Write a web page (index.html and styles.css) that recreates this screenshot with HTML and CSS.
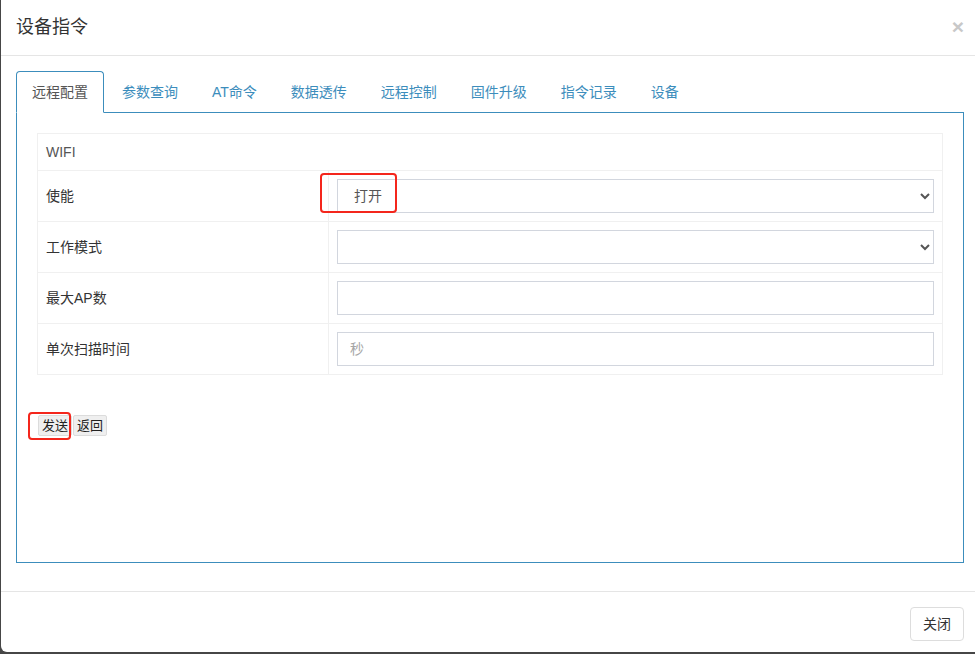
FILE: index.html
```html
<!DOCTYPE html>
<html lang="zh">
<head>
<meta charset="utf-8">
<title>设备指令</title>
<link rel="stylesheet" href="styles.css">
</head>
<body>
<div class="modal">
  <div class="modal-header">
    <h4 class="modal-title">设备指令</h4>
    <button class="close" type="button">×</button>
  </div>
  <div class="modal-body">
    <ul class="tabs">
      <li class="tab active">远程配置</li>
      <li class="tab">参数查询</li>
      <li class="tab">AT命令</li>
      <li class="tab">数据透传</li>
      <li class="tab">远程控制</li>
      <li class="tab">固件升级</li>
      <li class="tab">指令记录</li>
      <li class="tab">设备</li>
    </ul>
    <div class="pane">
      <table class="grid">
        <tr><th colspan="2">WIFI</th></tr>
        <tr>
          <td class="label">使能</td>
          <td class="field">
            <div class="mark-wrap">
              <select class="control"><option>打开</option><option>关闭</option></select>
              <span class="mark mark-select"></span>
            </div>
          </td>
        </tr>
        <tr>
          <td class="label">工作模式</td>
          <td class="field"><select class="control"><option></option></select></td>
        </tr>
        <tr>
          <td class="label">最大AP数</td>
          <td class="field"><input class="control" type="text"></td>
        </tr>
        <tr>
          <td class="label">单次扫描时间</td>
          <td class="field"><input class="control" type="text" placeholder="秒"></td>
        </tr>
      </table>
      <div class="actions">
        <div class="mark-wrap">
          <button class="btn-sm" type="button">发送</button>
          <span class="mark mark-send"></span>
        </div>
        <button class="btn-sm" type="button">返回</button>
      </div>
    </div>
  </div>
  <div class="modal-footer">
    <button class="btn-close" type="button">关闭</button>
  </div>
</div>
</body>
</html>
```

FILE: styles.css
```css
* { box-sizing: border-box; }
html, body { height: 100%; }
body {
  margin: 0;
  background: #464646;
  overflow: hidden;
  font-family: "Liberation Sans", "Noto Sans CJK SC", sans-serif;
  font-size: 14px;
  color: #333;
}
.modal {
  margin-left: 1px;
  width: 978px;
  height: 652px;
  background: #fff;
  border-radius: 0 0 0 6px;
  overflow: hidden;
}
.modal-header {
  display: flex;
  align-items: flex-start;
  justify-content: space-between;
  padding: 15px;
  border-bottom: 1px solid #e5e5e5;
}
.modal-title {
  margin: 0;
  font-size: 18px;
  font-weight: normal;
  line-height: 25px;
  color: #333;
}
.close {
  margin-top: 1px;
  padding: 0;
  border: 0;
  background: none;
  font-family: "Liberation Sans", sans-serif;
  font-size: 21px;
  font-weight: bold;
  line-height: 1;
  color: #c8c8c8;
}
.modal-body {
  padding: 15px 15px 28px;
}
.tabs {
  display: flex;
  gap: 2px;
  margin: 0;
  padding: 0;
  list-style: none;
  border-bottom: 1px solid #3c8dbc;
}
.tab {
  padding: 10px 15px;
  line-height: 20px;
  border: 1px solid transparent;
  border-radius: 4px 4px 0 0;
  margin-bottom: -1px;
  color: #3c8dbc;
}
.tab.active {
  color: #555;
  border-color: #3c8dbc;
  border-bottom-color: #fff;
  background: #fff;
}
.pane {
  height: 450px;
  padding: 20px;
  border: 1px solid #3c8dbc;
  border-top: 0;
}
.grid {
  width: 100%;
  border-collapse: collapse;
  border: 1px solid #f0f0f0;
}
.grid th, .grid td {
  border: 1px solid #f0f0f0;
  padding: 8px;
  line-height: 20px;
  text-align: left;
  vertical-align: middle;
}
.grid th {
  font-weight: normal;
  color: #555;
}
.grid .label {
  width: 291px;
  color: #333;
}
.control {
  display: block;
  width: 100%;
  height: 34px;
  padding: 6px 12px;
  border: 1px solid #d2d6de;
  border-radius: 0;
  background: #fff;
  font-family: "Liberation Sans", "Noto Sans CJK SC", sans-serif;
  font-size: 14px;
  color: #555;
}
.control::placeholder { color: #a5a5a5; }
.mark-wrap { position: relative; }
.mark {
  position: absolute;
  border: 2.5px solid #f4261c;
  border-radius: 4px;
  pointer-events: none;
}
.mark-select { left: -17px; top: -6px; width: 77px; height: 40px; }
.mark-send { left: -10px; top: -3px; width: 43px; height: 28px; }
.actions {
  display: flex;
  gap: 1px;
  margin: 40px 0 0 1px;
}
.btn-sm {
  display: block;
  padding: 1px 3px;
  border: 1px solid #dcdcdc;
  border-radius: 2px;
  background: #efefef;
  font-family: "Liberation Sans", "Noto Sans CJK SC", sans-serif;
  font-size: 13px;
  line-height: 17px;
  color: #222;
}
.modal-footer {
  display: flex;
  justify-content: flex-end;
  padding: 15px;
  border-top: 1px solid #e5e5e5;
}
.btn-close {
  padding: 6px 12px;
  border: 1px solid #ddd;
  border-radius: 4px;
  background: #fff;
  font-family: "Liberation Sans", "Noto Sans CJK SC", sans-serif;
  font-size: 14px;
  line-height: 20px;
  color: #333;
}
```
